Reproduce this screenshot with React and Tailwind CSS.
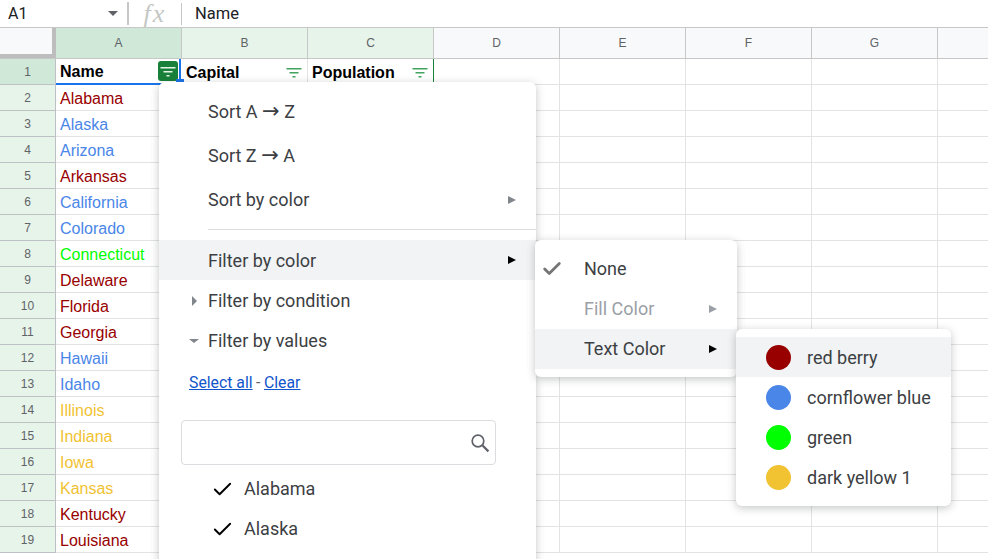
import React from 'react';
import { Check } from 'lucide-react';

const RED = 'text-[#980000]';
const BLUE = 'text-[#4a86e8]';
const GREEN = 'text-[#00ff00]';
const YELLOW = 'text-[#f1c232]';

const states = [
  ['Alabama', RED], ['Alaska', BLUE], ['Arizona', BLUE], ['Arkansas', RED], ['California', BLUE],
  ['Colorado', BLUE], ['Connecticut', GREEN], ['Delaware', RED], ['Florida', RED], ['Georgia', RED],
  ['Hawaii', BLUE], ['Idaho', BLUE], ['Illinois', YELLOW], ['Indiana', YELLOW], ['Iowa', YELLOW],
  ['Kansas', YELLOW], ['Kentucky', RED], ['Louisiana', RED],
];

const FilterGlyph = ({ color = '#43a35e' }) => (
  <svg width="16" height="10" viewBox="0 0 16 10" className="mt-[1px]">
    <rect x="0.5" y="0" width="15" height="1.5" fill={color} />
    <rect x="3.5" y="4" width="9" height="1.5" fill={color} />
    <rect x="6.5" y="8" width="3" height="1.5" fill={color} />
  </svg>
);

const Arrow = ({ color = 'border-l-black' }) => (
  <span className={`w-0 h-0 border-y-[4px] border-y-transparent border-l-[8px] ${color}`} />
);

const ColHeader = ({ label, tone = '' }) => (
  <div className={`w-[126px] shrink-0 h-full border-r border-[#c7c7c7] flex items-center justify-center text-[12px] text-[#5f6368] ${tone}`}>
    {label}
  </div>
);

const Cell = ({ children, className = '' }) => (
  <div className={`w-[126px] shrink-0 h-full border-r border-b border-[#e2e3e3] flex items-center pl-[4px] pt-[2px] overflow-hidden whitespace-nowrap ${className}`}>
    {children}
  </div>
);

const Row = ({ num, state, color }) => (
  <div className="flex h-[26px]">
    <div className="w-[56px] shrink-0 h-full bg-[#e7f4ea] border-r border-b border-[#bdc1c6] flex items-center justify-center text-[12px] text-[#5f6368]">
      {num}
    </div>
    <Cell className={color}>{state}</Cell>
    {[0, 1, 2, 3, 4, 5, 6].map((i) => <Cell key={i} />)}
  </div>
);

const MenuItem = ({ children, h = 'h-10', active = false, arrow, className = '', textClass = 'mb-[2px]' }) => (
  <div className={`${h} flex items-center justify-between pr-[20px] pl-[49px] ${active ? 'bg-[#f1f3f4]' : ''} ${className}`}>
    <span className={textClass}>{children}</span>
    {arrow}
  </div>
);

const SortLabel = ({ from, to }) => (
  <>
    Sort {from} <span className="font-['DejaVu_Sans',sans-serif] text-[21px] leading-none">→</span> {to}
  </>
);

export default function App() {
  return (
    <div className="relative w-[988px] h-[559px] overflow-hidden bg-white font-['Liberation_Sans',Arial,sans-serif] text-[16px] text-black">
      {/* formula bar */}
      <div className="flex items-center h-[28px] border-b border-[#c7c7c7] font-['Roboto',sans-serif] text-[#202124]">
        <div className="w-[129px] h-[23px] border-r-2 border-[#c7c7c7] flex items-center justify-between pl-[8px] pr-[9px] text-[16px]">
          <span>A1</span>
          <span className="w-0 h-0 border-x-[5px] border-x-transparent border-t-[5px] border-t-[#5f6368]" />
        </div>
        <div className="w-[53px] h-[22px] border-r border-[#c7c7c7] flex items-center justify-center font-['Liberation_Serif',serif] italic text-[26px] leading-none tracking-[2px] text-[#c4c7c5]">
          fx
        </div>
        <div className="pl-[13px] pt-[1px] text-[16.5px]">Name</div>
      </div>

      {/* column headers */}
      <div className="flex h-[31px] bg-[#f8f9fa] border-b border-[#c7c7c7]">
        <div className="w-[56px] shrink-0 h-full bg-[#f8f9fa] border-r-[4px] border-b-[4px] border-[#bdbdbd]" />
        <ColHeader label="A" tone="bg-[#d0e8d8]" />
        <ColHeader label="B" tone="bg-[#e7f4ea]" />
        <ColHeader label="C" tone="bg-[#e7f4ea]" />
        <ColHeader label="D" />
        <ColHeader label="E" />
        <ColHeader label="F" />
        <ColHeader label="G" />
        <div className="flex-1" />
      </div>

      {/* header row */}
      <div className="flex h-[26px] font-bold">
        <div className="w-[56px] shrink-0 h-full bg-[#d0e8d8] border-r border-b border-[#bdc1c6] flex items-center justify-center text-[12px] font-normal text-[#5f6368]">
          1
        </div>
        <div className="relative w-[126px] shrink-0 h-full flex items-center pl-[4px] pt-[2px] border-b-2 border-[#1a73e8]">
          Name
          <div className="absolute left-[102px] top-[2px] w-[20px] h-[20px] rounded-[3px] bg-[#188038] flex items-center justify-center">
            <FilterGlyph color="#e6f4ea" />
          </div>
          <div className="absolute right-[1px] top-0 w-[2px] h-[21px] bg-[#1a73e8]" />
          <div className="absolute -right-[2px] top-[20px] w-[8px] h-[4px] bg-[#1a73e8]" />
        </div>
        <Cell className="justify-between pr-[5px]">
          <span>Capital</span>
          <FilterGlyph />
        </Cell>
        <Cell className="justify-between pr-[5px] border-r-[#188038]">
          <span>Population</span>
          <FilterGlyph />
        </Cell>
        {[0, 1, 2, 3, 4, 5].map((i) => <Cell key={i} />)}
      </div>

      {states.map(([name, color], i) => (
        <Row key={name} num={i + 2} state={name} color={color} />
      ))}

      {/* filter menu */}
      <div className="absolute left-[159px] top-[82px] w-[377px] h-[490px] pt-[8px] bg-white rounded-[6px] shadow-[0_2px_8px_rgba(60,64,67,0.3)] font-['Roboto',sans-serif] text-[18px] text-[#3c4043]">
        <MenuItem h="h-11"><SortLabel from="A" to="Z" /></MenuItem>
        <MenuItem h="h-11"><SortLabel from="Z" to="A" /></MenuItem>
        <MenuItem h="h-11" arrow={<Arrow color="border-l-[#80868b]" />}>Sort by color</MenuItem>
        <div className="mt-[7px] mb-[10px] ml-[49px] h-px bg-[#dadce0]" />
        <MenuItem active arrow={<Arrow />} textClass="">Filter by color</MenuItem>
        <div className="h-10 mt-px flex items-center pl-[33px]">
          <span className="w-0 h-0 border-y-[5px] border-y-transparent border-l-[5px] border-l-[#80868b] mr-[11px]" />
          <span className="mb-[2px]">Filter by condition</span>
        </div>
        <div className="h-10 flex items-center pl-[30px]">
          <span className="w-0 h-0 border-x-[5px] border-x-transparent border-t-[4px] border-t-[#80868b] mr-[9px]" />
          <span className="mb-[2px]">Filter by values</span>
        </div>
        <div className="h-10 flex items-center pl-[30px] pt-[4px] text-[15.8px] text-[#5f6368]">
          <span className="text-[#1155cc] underline">Select all</span>
          <span className="mx-[3.5px]">-</span>
          <span className="text-[#1155cc] underline">Clear</span>
        </div>
        <div className="mt-[19px] ml-[22px] w-[315px] h-[45px] border border-[#dadce0] rounded-[4px] flex items-center justify-end pr-[5px]">
          <svg width="20" height="20" viewBox="0 0 20 20" fill="none" stroke="#5f6368">
            <circle cx="8" cy="8" r="5.8" strokeWidth="1.7" />
            <path d="M12.3 12.3 L18.4 18.4" strokeWidth="2.2" />
          </svg>
        </div>
        <div className="h-10 mt-[4px] flex items-center pl-[52px]">
          <Check size={23} strokeWidth={2} className="text-black mr-[10px]" />
          <span className="mb-[2px]">Alabama</span>
        </div>
        <div className="h-10 flex items-center pl-[52px]">
          <Check size={23} strokeWidth={2} className="text-black mr-[10px]" />
          <span className="mb-[2px]">Alaska</span>
        </div>
      </div>

      {/* filter by color submenu */}
      <div className="absolute left-[535px] top-[240px] w-[202px] pt-[9px] pb-[8px] bg-white rounded-[6px] shadow-[0_2px_8px_rgba(60,64,67,0.3)] font-['Roboto',sans-serif] text-[18px] text-[#3c4043]">
        <div className="h-10 flex items-center pl-[6px]">
          <Check size={22} strokeWidth={3} className="text-[#757575] mr-[21px]" />
          <span className="mb-[2px]">None</span>
        </div>
        <MenuItem arrow={<Arrow color="border-l-[#9aa0a6]" />} className="text-[#9aa0a6]">Fill Color</MenuItem>
        <MenuItem active arrow={<Arrow />}>Text Color</MenuItem>
      </div>

      {/* text colour submenu */}
      <div className="absolute left-[736px] top-[329px] w-[215px] pt-[8px] pb-[9px] bg-white rounded-[6px] shadow-[0_2px_8px_rgba(60,64,67,0.3)] font-['Roboto',sans-serif] text-[18px] text-[#3c4043]">
        {[
          ['red berry', 'bg-[#980000]'],
          ['cornflower blue', 'bg-[#4a86e8]'],
          ['green', 'bg-[#00ff00]'],
          ['dark yellow 1', 'bg-[#f1c232]'],
        ].map(([label, swatch], i) => (
          <div key={label} className={`h-10 flex items-center pl-[30px] ${i === 0 ? 'bg-[#f1f3f4]' : ''}`}>
            <span className={`w-[25px] h-[25px] rounded-full mr-[16px] ${swatch}`} />
            {label}
          </div>
        ))}
      </div>
    </div>
  );
}
